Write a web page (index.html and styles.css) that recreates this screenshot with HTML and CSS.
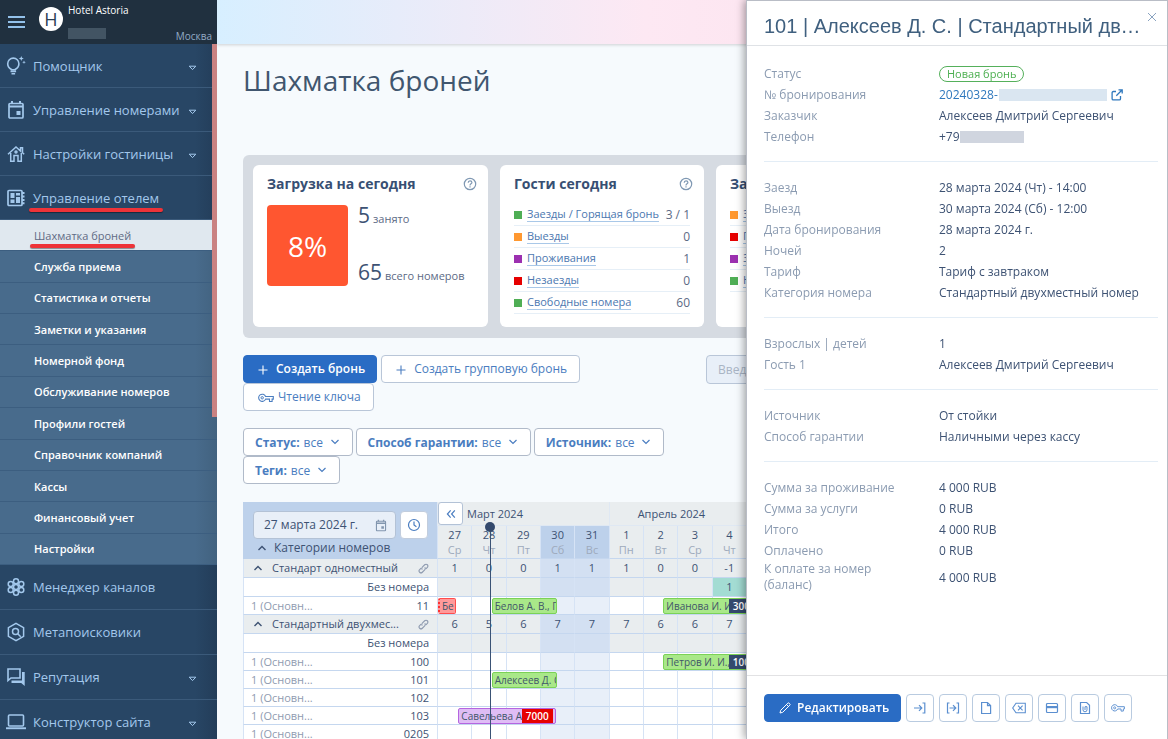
FILE: index.html
```html
<!DOCTYPE html>
<html lang="ru">
<head>
<meta charset="utf-8">
<title>Шахматка броней</title>
<link rel="stylesheet" href="styles.css">
</head>
<body>
<svg class="defs" aria-hidden="true">
  <symbol id="i-caret" viewBox="0 0 9 6"><path d="M1.2 1.2h6.6L4.5 4.6z" fill="none" stroke="currentColor"/></symbol>
  <symbol id="i-chevron" viewBox="0 0 10 6"><path d="M1.5 1L5 4.5 8.500 1" fill="none" stroke="currentColor" stroke-width="1.200"/></symbol>
  <symbol id="i-up" viewBox="0 0 10 6"><path d="M1.500 5L5 1.500 8.500 5" fill="none" stroke="currentColor" stroke-width="1.400"/></symbol>
  <symbol id="i-help" viewBox="0 0 14 14"><g fill="none" stroke="currentColor" stroke-width="1.200"><circle cx="7" cy="7" r="5.700"/><path d="M5.200 5.700c0-2.600 3.700-2.400 3.700-.2 0 1.300-1.900 1.400-1.900 2.900M7 9.300v1.200"/></g></symbol>
  <symbol id="i-plus" viewBox="0 0 10 10"><path d="M5 .5v9M.5 5h9" stroke="currentColor" stroke-width="1.100"/></symbol>
  <symbol id="i-key" viewBox="0 0 16 10"><path d="M7.600 3.500h7.700v2.600h-1.200v2.400h-2.600V6.100H7.600A3.600 3.600 0 1 1 7.600 3.500z" fill="none" stroke="currentColor" stroke-width="1.100"/><circle cx="4.200" cy="4.800" r="1.200" fill="none" stroke="currentColor"/></symbol>
  <symbol id="i-event" viewBox="0 0 18 20"><rect x="2" y="3.500" width="14" height="14.500" rx="1" fill="none" stroke="currentColor" stroke-width="1.700"/><path d="M2 5.500h14v2H2zM4 1h2v3H4zM12 1h2v3h-2zM9.500 11h4v4h-4z" fill="currentColor"/></symbol>
  <symbol id="i-link" viewBox="0 0 12 12"><g fill="none" stroke="currentColor" stroke-width="1.200"><path d="M4.700 7.300a2 2 0 0 1 0-2.800l2.600-2.600a2.050 2.050 0 0 1 2.900 2.900L8.600 6.400"/><path d="M7.300 4.700a2 2 0 0 1 0 2.800L4.700 10.100A2.050 2.050 0 0 1 1.800 7.200L3.400 5.600"/></g></symbol>
</svg>

<div class="app">
  <aside class="sidebar">
    <header class="brand">
      <button class="burger" aria-label="Меню"><span></span><span></span><span></span></button>
      <span class="brand-logo">H</span>
      <span class="brand-text">
        <span class="brand-name">Hotel Astoria</span>
        <span class="brand-mask"></span>
        <span class="brand-city">Москва</span>
      </span>
    </header>
    <nav class="nav">
      <a class="nav-item" href="#"><svg class="nav-icon" viewBox="0 0 20 20"><path d="M5.500 13.500C2.800 12 1.700 9.800 1.700 7.700a5.600 5.600 0 0 1 11.200 0c0 2.100-1.100 4.300-3.800 5.800v.4H5.500z" fill="none" stroke="currentColor" stroke-width="1.600"/><path d="M4.500 15.500h5.600M5.500 17.800h3.600" stroke="currentColor" stroke-width="1.500"/><path d="M15.300 0l.7 1.800 1.800.7-1.800.7-.7 1.800-.7-1.800-1.800-.7 1.800-.7zM18 4.500l.5 1.300 1.300.5-1.300.5-.5 1.300-.5-1.300-1.300-.5 1.300-.5z" fill="currentColor"/></svg><span>Помощник</span><svg class="nav-caret"><use href="#i-caret"/></svg></a>
      <a class="nav-item" href="#"><svg class="nav-icon"><use href="#i-event"/></svg><span>Управление номерами</span><svg class="nav-caret"><use href="#i-caret"/></svg></a>
      <a class="nav-item" href="#"><svg class="nav-icon" viewBox="0 0 20 20"><g fill="none" stroke="currentColor" stroke-width="1.500"><path d="M2 10.200L10 3l4.500 4V3.700h2v5l1.700 1.500"/><path d="M4.700 9v8.200H8v-5.700h4v5.700h3.300V9"/><circle cx="10" cy="8" r="1"/></g></svg><span>Настройки гостиницы</span><svg class="nav-caret"><use href="#i-caret"/></svg></a>
      <a class="nav-item" href="#"><svg class="nav-icon" viewBox="0 0 20 20"><rect x="2" y="2.500" width="14" height="15" rx="1" fill="none" stroke="currentColor" stroke-width="1.700"/><path d="M4.500 5h4v5h-4zM4.500 11.500h4V15h-4zM10 5h4v2.500h-4zM10 9h4v6h-4zM16 4h2.500v2H16zM16 7.500h2.500v2H16zM16 11h2.500v2H16zM16 14.300h2.500v2H16z" fill="currentColor"/></svg><span class="marked">Управление отелем</span></a>
      <div class="subnav">
        <a class="subnav-item subnav-item--active" href="#"><span class="marked">Шахматка броней</span></a>
        <a class="subnav-item" href="#">Служба приема</a>
        <a class="subnav-item" href="#">Статистика и отчеты</a>
        <a class="subnav-item" href="#">Заметки и указания</a>
        <a class="subnav-item" href="#">Номерной фонд</a>
        <a class="subnav-item" href="#">Обслуживание номеров</a>
        <a class="subnav-item" href="#">Профили гостей</a>
        <a class="subnav-item" href="#">Справочник компаний</a>
        <a class="subnav-item" href="#">Кассы</a>
        <a class="subnav-item" href="#">Финансовый учет</a>
        <a class="subnav-item" href="#">Настройки</a>
      </div>
      <div class="nav-lower">
        <a class="nav-item" href="#"><svg class="nav-icon" viewBox="0 0 20 20"><g fill="none" stroke="currentColor" stroke-width="1.500"><circle cx="10" cy="10" r="2.500"/><circle cx="10" cy="4.300" r="2.500"/><circle cx="10" cy="15.700" r="2.500"/><circle cx="4.700" cy="7" r="2.500"/><circle cx="15.300" cy="7" r="2.500"/><circle cx="4.700" cy="13" r="2.500"/><circle cx="15.300" cy="13" r="2.500"/></g></svg><span>Менеджер каналов</span></a>
        <a class="nav-item" href="#"><svg class="nav-icon" viewBox="0 0 20 20"><g fill="none" stroke="currentColor" stroke-width="1.500"><path d="M10 1.300l7.600 4.400v8.600L10 18.700l-7.600-4.400V5.700z"/><circle cx="9.500" cy="9.500" r="3"/><path d="M11.700 11.700l3 3"/></g></svg><span>Метапоисковики</span></a>
        <a class="nav-item" href="#"><svg class="nav-icon" viewBox="0 0 20 20"><path d="M2 2h12v9H5l-3 2.500z" fill="none" stroke="currentColor" stroke-width="1.600"/><path d="M16 5h2.700v14l-3.500-3H5.500v-2.500H16z" fill="currentColor"/></svg><span>Репутация</span><svg class="nav-caret"><use href="#i-caret"/></svg></a>
        <a class="nav-item" href="#"><svg class="nav-icon" viewBox="0 0 20 20"><rect x="2.500" y="3" width="15" height="11" rx="1" fill="none" stroke="currentColor" stroke-width="1.600"/><path d="M0 15.300h20v1.900H0z" fill="currentColor"/></svg><span>Конструктор сайта</span><svg class="nav-caret"><use href="#i-caret"/></svg></a>
      </div>
    </nav>
    <div class="sidebar-thumb"></div>
  </aside>

  <main class="main">
    <div class="topbar"></div>
    <div class="content">
      <h1 class="title">Шахматка броней</h1>

      <section class="stats">
        <article class="card card--load">
          <header class="card-head"><h2>Загрузка на сегодня</h2><svg class="help"><use href="#i-help"/></svg></header>
          <div class="load">
            <div class="load-tile">8%</div>
            <div class="load-figures">
              <p><span class="figure">5</span> занято</p>
              <p><span class="figure">65</span> всего номеров</p>
            </div>
          </div>
        </article>
        <article class="card card--guests">
          <header class="card-head"><h2>Гости сегодня</h2><svg class="help"><use href="#i-help"/></svg></header>
          <ul class="guests">
            <li><i class="dot dot--green"></i><a href="#">Заезды / Горящая бронь</a><span>3 / 1</span></li>
            <li><i class="dot dot--orange"></i><a href="#">Выезды</a><span>0</span></li>
            <li><i class="dot dot--purple"></i><a href="#">Проживания</a><span>1</span></li>
            <li><i class="dot dot--red"></i><a href="#">Незаезды</a><span>0</span></li>
            <li><i class="dot dot--green"></i><a href="#">Свободные номера</a><span>60</span></li>
          </ul>
        </article>
        <article class="card card--more">
          <header class="card-head"><h2>За</h2></header>
          <ul class="guests">
            <li><i class="dot dot--orange"></i><a href="#">З</a></li>
            <li><i class="dot dot--red"></i><a href="#">П</a></li>
            <li><i class="dot dot--purple"></i><a href="#">З</a></li>
            <li><i class="dot dot--green"></i><a href="#">Н</a></li>
          </ul>
        </article>
      </section>

      <div class="toolbar">
        <div class="wrap-row">
          <button class="btn btn--primary"><svg class="ic-plus"><use href="#i-plus"/></svg>Создать бронь</button>
          <button class="btn"><svg class="ic-plus"><use href="#i-plus"/></svg>Создать групповую бронь</button>
          <button class="btn btn--key"><svg class="ic-key"><use href="#i-key"/></svg>Чтение ключа</button>
        </div>
        <input class="search" type="text" placeholder="Введите" aria-label="Поиск">
      </div>

      <div class="toolbar toolbar--filters">
        <div class="wrap-row">
          <label class="filter"><b>Статус:</b><select><option>все</option></select><svg class="ic-chevron"><use href="#i-chevron"/></svg></label>
          <label class="filter"><b>Способ гарантии:</b><select><option>все</option></select><svg class="ic-chevron"><use href="#i-chevron"/></svg></label>
          <label class="filter"><b>Источник:</b><select><option>все</option></select><svg class="ic-chevron"><use href="#i-chevron"/></svg></label>
          <label class="filter"><b>Теги:</b><select><option>все</option></select><svg class="ic-chevron"><use href="#i-chevron"/></svg></label>
        </div>
      </div>

      <div class="calendar">
        <table class="grid">
          <thead>
            <tr class="months">
              <th class="corner" rowspan="2">
                <div class="corner-tools">
                  <span class="date-box"><input type="text" value="27 марта 2024 г." aria-label="Дата"><svg class="ic-date"><use href="#i-event"/></svg></span>
                  <button class="clock" aria-label="Сегодня"><svg viewBox="0 0 14 14"><circle cx="7" cy="7" r="5.500" fill="none" stroke="currentColor" stroke-width="1.200"/><path d="M7 3.500V7l2.400 1.800" fill="none" stroke="currentColor" stroke-width="1.200"/></svg></button>
                </div>
                <div class="corner-toggle"><svg class="ic-up"><use href="#i-up"/></svg>Категории номеров</div>
              </th>
              <th colspan="5"><div class="month-head"><button class="back" aria-label="Назад"><svg viewBox="0 0 10 10"><path d="M4.700 2L2 5l2.700 3M8.200 2L5.500 5l2.700 3" fill="none" stroke="currentColor"/></svg></button>Март 2024</div></th>
              <th class="april" colspan="16">Апрель 2024</th>
            </tr>
            <tr class="days"></tr>
          </thead>
          <tbody></tbody>
        </table>
        <div class="now"></div>
      </div>
    </div>
  </main>

  <aside class="panel">
    <header class="panel-head">
      <h2>101 | Алексеев Д. С. | Стандартный двухместный номер</h2>
      <button class="close" aria-label="Закрыть"><svg viewBox="0 0 10 10"><path d="M1 1l8 8M9 1L1 9" stroke="currentColor"/></svg></button>
    </header>
    <div class="panel-body">
      <dl class="facts">
        <dt>Статус</dt><dd><span class="badge">Новая бронь</span></dd>
        <dt>№ бронирования</dt><dd><a class="ref" href="#">20240328-<span class="mask mask--ref"></span><svg class="ic-open" viewBox="0 0 12 12"><path d="M5 2.500H2.300a1.200 1.200 0 0 0-1.200 1.200v6a1.200 1.200 0 0 0 1.200 1.200h6a1.200 1.200 0 0 0 1.200-1.200V7M7.500.8h3.700v3.700M11 1L5.300 6.700" fill="none" stroke="currentColor" stroke-width="1.300"/></svg></a></dd>
        <dt>Заказчик</dt><dd>Алексеев Дмитрий Сергеевич</dd>
        <dt>Телефон</dt><dd class="phone">+79<span class="mask mask--phone"></span></dd>
      </dl>
      <dl class="facts">
        <dt>Заезд</dt><dd>28 марта 2024 (Чт) - 14:00</dd>
        <dt>Выезд</dt><dd>30 марта 2024 (Сб) - 12:00</dd>
        <dt>Дата бронирования</dt><dd>28 марта 2024 г.</dd>
        <dt>Ночей</dt><dd>2</dd>
        <dt>Тариф</dt><dd>Тариф с завтраком</dd>
        <dt>Категория номера</dt><dd>Стандартный двухместный номер</dd>
      </dl>
      <dl class="facts">
        <dt>Взрослых | детей</dt><dd>1</dd>
        <dt>Гость 1</dt><dd>Алексеев Дмитрий Сергеевич</dd>
      </dl>
      <dl class="facts">
        <dt>Источник</dt><dd>От стойки</dd>
        <dt>Способ гарантии</dt><dd>Наличными через кассу</dd>
      </dl>
      <dl class="facts">
        <dt>Сумма за проживание</dt><dd>4 000 RUB</dd>
        <dt>Сумма за услуги</dt><dd>0 RUB</dd>
        <dt>Итого</dt><dd>4 000 RUB</dd>
        <dt>Оплачено</dt><dd>0 RUB</dd>
        <dt class="two-line">К оплате за номер (баланс)</dt><dd>4 000 RUB</dd>
      </dl>
    </div>
    <footer class="panel-foot">
      <button class="btn btn--primary btn--edit"><svg class="ic-pen" viewBox="0 0 12 12"><path d="M1 11l.7-2.700L8.900 1.100a.8.8 0 0 1 1.100 0l.9.9a.8.8 0 0 1 0 1.100L3.700 10.300zM7.500 2.500l2 2" fill="none" stroke="currentColor"/></svg>Редактировать</button>
      <button class="tool" aria-label="Заселить"><svg viewBox="0 0 14 14"><path d="M1 7h8M6 4.200L8.800 7 6 9.800M9.500 2h2.300v10H9.500" fill="none" stroke="currentColor" stroke-width="1.200"/></svg></button>
      <button class="tool" aria-label="Выселить"><svg viewBox="0 0 14 14"><path d="M3.500 7h6M7 4.200L9.800 7 7 9.800M10.500 2h2v10h-2M3.500 2h-2v10h2" fill="none" stroke="currentColor" stroke-width="1.200"/></svg></button>
      <button class="tool" aria-label="Документ"><svg viewBox="0 0 14 14"><path d="M8.500 1.500H2.600v11h9V4.600zM8.500 1.500v3.200h3.100" fill="none" stroke="currentColor" stroke-width="1.200"/></svg></button>
      <button class="tool" aria-label="Отменить"><svg viewBox="0 0 14 14"><path d="M4 2.300h9.300v9.400H4L.7 7zM6 4.700l4.600 4.600M10.600 4.700L6 9.300" fill="none" stroke="currentColor" stroke-width="1.100"/></svg></button>
      <button class="tool" aria-label="Оплата"><svg viewBox="0 0 14 14"><rect x="1.500" y="2.500" width="11" height="9" rx="1" fill="none" stroke="currentColor" stroke-width="1.200"/><path d="M1.500 5h11v2.200h-11z" fill="currentColor"/></svg></button>
      <button class="tool" aria-label="Вложение"><svg viewBox="0 0 14 14"><path d="M8.700 1.500H2.500v11h9V4.300z" fill="none" stroke="currentColor" stroke-width="1.200"/><path d="M5 5.500v3.300a2 2 0 0 0 4 0V5.700H7v3.300" fill="none" stroke="currentColor"/></svg></button>
      <button class="tool" aria-label="Ключ"><svg viewBox="0 0 16 12"><use href="#i-key"/></svg></button>
    </footer>
  </aside>
</div>
<script src="calendar.js"></script>
</body>
</html>
```
FILE: styles.css
```css
* { box-sizing: border-box; }
body {
  margin: 0;
  font-family: "Open Sans", "Noto Sans", sans-serif;
  font-size: 12px;
  color: #3d5273;
  background: #f6fafd;
}
h1, h2, p, ul, dl, dd { margin: 0; padding: 0; }
ul { list-style: none; }
a { color: inherit; text-decoration: none; }
button, input, select { font: inherit; color: inherit; }
button { cursor: pointer; padding: 0; }
svg { flex: none; }
.defs { display: none; }

.app { display: flex; height: 100vh; overflow: hidden; }

/* Sidebar */
.sidebar {
  position: relative;
  flex: none;
  width: 217px;
  overflow: hidden;
  background: linear-gradient(90deg, #284665 90%, #233d59);
  color: #a3c8ec;
}
.brand {
  display: flex;
  height: 44px;
  padding-left: 8px;
  background: #20303f;
}
.burger {
  display: flex;
  flex-direction: column;
  gap: 3px;
  align-self: center;
  width: 17px;
  border: 0;
  background: none;
}
.burger span { height: 2px; background: #93c1ea; }
.brand-logo {
  display: grid;
  place-items: center;
  width: 24px;
  height: 24px;
  margin: 7px 5px 0 14px;
  border-radius: 50%;
  background: #fff;
  color: #2b3f55;
  font-size: 18px;
}
.brand-text {
  display: flex;
  flex: 1;
  flex-direction: column;
  padding: 3px 5px 0 0;
  font-size: 10px;
  line-height: 14px;
}
.brand-name { color: #fff; }
.brand-mask { width: 38px; height: 11px; margin-top: 11px; background: #425463; }
.brand-city { margin-top: -10px; align-self: flex-end; color: #93abc6; }
.nav-item {
  display: flex;
  align-items: center;
  height: 44px;
  padding: 0 20px 0 6px;
  border-bottom: 1px solid #3b5a7a;
  font-size: 13px;
}
.nav-lower .nav-item { height: 45px; }
.nav-icon { width: 20px; height: 20px; margin-right: 7px; }
.nav-caret { width: 9px; height: 6px; margin: 4px 0 0 auto; }
.marked { position: relative; }
.marked::after {
  content: "";
  position: absolute;
  left: -4px;
  right: -4px;
  bottom: -5px;
  height: 4px;
  border-radius: 2px;
  background: #ee3338;
  box-shadow: 0 1px 1px #00000066;
}
.subnav {
  display: flex;
  flex-direction: column;
  min-height: 345px;
  background: linear-gradient(90deg, #486b8c 90%, #42627f);
  color: #fff;
  font-size: 11px;
  font-weight: 600;
}
.subnav-item {
  display: flex;
  flex: 1;
  align-items: center;
  padding-left: 34px;
  border-bottom: 1px solid #3c5e80;
}
.subnav-item--active { background: #e0e8ef; color: #5f6b85; font-weight: 400; }
.sidebar-thumb {
  position: absolute;
  top: 44px;
  right: 0;
  width: 5px;
  height: 373px;
  background: #ca8282;
}

/* Main area */
.main { flex: 1; min-width: 0; overflow: hidden; }
.topbar {
  height: 44px;
  background: linear-gradient(90deg, #d7efff, #fde8f3 45%, #fcdde8);
  box-shadow: 0 1px 3px #0000002b;
}
.content { padding: 16px 10px 0 26px; }
.title { padding-bottom: 55px; line-height: 40px; font-size: 28px; font-weight: 400; color: #40566f; }

.stats {
  display: flex;
  gap: 12px;
  padding: 10px 10px 11px;
  border-radius: 6px;
  background: #d6dbe2;
}
.card { min-height: 162px; padding: 9px 14px 0; border-radius: 6px; background: #fff; }
.card--load { flex: none; width: 235px; }
.card--guests { flex: none; width: 204px; }
.card--more { flex: 1; }
.card-head { display: flex; justify-content: space-between; align-items: center; line-height: 20px; }
.card-head h2 { font-size: 14px; font-weight: 700; color: #374f73; }
.help { width: 14px; height: 14px; margin-right: -3px; color: #7f98b3; }
.load { display: flex; gap: 10px; margin-top: 11px; }
.load-tile {
  display: grid;
  place-items: center;
  width: 81px;
  height: 81px;
  border-radius: 4px;
  background: #ff5630;
  color: #fff;
  font-size: 28px;
}
.load-figures { display: flex; flex-direction: column; justify-content: space-between; font-size: 11px; line-height: 20px; color: #5c6a85; }
.load-figures p { display: flex; align-items: baseline; gap: 3px; }
.figure { font-size: 21px; color: #3d5273; }
.guests { margin-top: 10px; }
.guests li { display: flex; align-items: center; height: 22px; border-bottom: 1px solid #e6eff7; line-height: 14px; font-size: 11px; white-space: nowrap; }
.guests li span { margin-left: auto; color: #5c6a85; font-size: 12px; }
.guests a { border-bottom: 1px solid #a9c8e8; color: #4c78b0; }
.dot { width: 8px; height: 8px; margin-right: 5px; }
.dot--green { background: #4fae55; }
.dot--orange { background: #ff9830; }
.dot--purple { background: #9c30b0; }
.dot--red { background: #e60000; }

.toolbar { display: grid; grid-template-columns: 463px 1fr; align-items: start; margin-top: 17px; }
.wrap-row { display: flex; flex-wrap: wrap; column-gap: 4px; }
.btn {
  display: flex;
  align-items: center;
  height: 28px;
  padding: 0 12px 2px 14px;
  border: 1px solid #b9c6d8;
  border-radius: 4px;
  background: #fff;
  color: #4a7dc0;
}
.btn--primary { padding-right: 11px; border-color: #2a6cc4; background: #2a6cc4; color: #fff; font-weight: 600; }
.ic-plus { width: 10px; height: 10px; margin: 4px 8px 0 0; }
.ic-key { width: 16px; height: 10px; margin: 4px 4px 0 0; }
.search { height: 29px; padding: 0 11px; border: 1px solid #b9c6d8; border-radius: 4px; background: #e8eff8; }
.search::placeholder { color: #a9b4c4; opacity: 1; }
.toolbar--filters .wrap-row { column-gap: 3px; }
.filter {
  display: flex;
  align-items: center;
  height: 28px;
  padding: 0 12px 0 11px;
  border: 1px solid #b0bac9;
  border-radius: 4px;
  background: #fff;
  color: #4a7dc0;
}
.filter b { margin-right: 4px; }
.filter select { appearance: none; width: 26px; padding: 0; border: 0; background: none; }
.ic-chevron { width: 10px; height: 6px; }

/* Booking calendar */
.calendar { position: relative; margin-top: 18px; }
.grid { width: 100%; table-layout: fixed; border-spacing: 0; }
.grid th, .grid td {
  padding: 0;
  border-bottom: 1px solid #c5d7ef;
  border-left: 1px solid #d6e3f5;
  font-weight: 400;
  line-height: 16px;
  text-align: center;
  white-space: nowrap;
}
.grid .corner { width: 194px; padding: 9px 9px 0; border-color: #bdd1eb; background: #bdd1eb; vertical-align: top; }
.corner-tools { display: flex; gap: 4px; }
.date-box { display: flex; flex: 1; align-items: center; min-width: 0; height: 28px; padding: 0 8px 0 10px; border: 1px solid #b3c2d6; border-radius: 4px; background: #e8eff8; }
.date-box input { flex: 1; min-width: 0; padding: 0; border: 0; background: none; }
.ic-date { width: 12px; height: 13px; color: #8296ae; }
.clock { display: grid; place-items: center; width: 28px; height: 28px; border: 1px solid #c2cddd; border-radius: 4px; background: #fff; color: #4a7dc0; }
.clock svg { width: 14px; height: 14px; }
.corner-toggle { display: flex; align-items: center; gap: 7px; padding-left: 4px; line-height: 18px; }
.ic-up { width: 10px; height: 6px; }
.months { height: 24px; background: #e9edef; }
.months th:not(.corner) { border-color: #dfe8f3; font-size: 11px; }
.month-head { display: flex; align-items: center; gap: 4px; }
.back { display: grid; place-items: center; width: 25px; height: 23px; border: 1px solid #b3c2d6; border-radius: 3px; background: #fff; color: #4a7dc0; }
.back svg { width: 12px; height: 12px; }
.grid .april { padding-left: 28px; text-align: left; }
.days { height: 33px; background: #e9edef; }
.days span { display: block; color: #9eaabc; }
.grid .days th { font-size: 11px; line-height: 15px; }
.days .weekend { background: #bdd1eb; }
.category, .unassigned { height: 19px; background: #e9edef; }
.room { height: 18px; background: #fff; }
.grid tbody td, .grid tbody th { font-size: 11px; }
.category .weekend, .unassigned .weekend { background: #d3e0f2; }
.room .weekend { background: #e8eff9; }
.unassigned th { background: #fff; }
.unassigned .overbooked { background: #a3dcd3; }
.row-head { display: flex; align-items: center; justify-content: space-between; padding: 0 8px 0 7px; }
.row-head .ic-up { margin: 0 9px 0 2px; }
.row-head .ic-link { width: 11px; height: 11px; color: #8f9bb0; }
.row-head .name { margin-right: auto; }
.room .group { color: #8f9bb0; }
.grid td { position: relative; }
.booking {
  position: absolute;
  z-index: 1;
  top: 1px;
  display: flex;
  height: 16px;
  overflow: hidden;
  border: 1px solid #7bd257;
  border-radius: 2px;
  background: #a9e889;
  color: #41566a;
  font-size: 10px;
  line-height: 14px;
  text-align: left;
}
.booking span { flex: 1; min-width: 0; overflow: hidden; padding-left: 2px; }
.booking b { padding: 0 4px; background: #34496d; color: #fff; font-weight: 600; }
.booking--purple { padding-right: 2px; border-color: #b565e0; background: #dfbdf5; }
.booking--purple b { background: #e60000; }
.booking--red { border-color: #ff4d4d; border-left: 2px dotted #f33; background: #ff9a9a; }
.now { position: absolute; z-index: 2; top: 24px; bottom: 0; left: 247px; width: 1px; background: #3a5275; }
.now::before { content: ""; position: absolute; top: -4px; left: -5px; width: 10px; height: 10px; border-radius: 50%; background: #34496d; }

/* Reservation drawer */
.panel {
  position: fixed;
  z-index: 5;
  inset: 0 0 0 auto;
  display: flex;
  flex-direction: column;
  width: 422px;
  border: 1px solid #b9bdc6;
  border-bottom: 0;
  background: #fff;
  box-shadow: -2px 0 8px #00000059;
}
.panel-head { display: flex; height: 45px; padding-left: 17px; border-bottom: 1px solid #dfe2e6; }
.panel-head h2 {
  flex: 1;
  overflow: hidden;
  font-family: "Liberation Sans", "Open Sans", sans-serif;
  font-size: 20px;
  font-weight: 400;
  line-height: 50px;
  color: #40607f;
  white-space: nowrap;
  text-overflow: ellipsis;
}
.close { width: 10px; height: 10px; margin: 11px 10px 0 4px; border: 0; background: none; color: #8aa3c0; }
.close svg { display: block; width: 10px; height: 10px; }
.panel-body { flex: 1; padding: 2px 9px 0 17px; }
.facts {
  display: grid;
  grid-template-columns: 175px 1fr;
  grid-auto-rows: minmax(21px, auto);
  align-items: center;
  padding: 15px 0 14px;
  border-top: 1px solid #e3edf6;
}
.facts:first-child { border-top: 0; }
.facts dt { color: #8b9bb1; }
.facts .two-line { padding-right: 50px; line-height: 16px; }
.badge { display: inline-block; height: 16px; padding: 0 7px; border: 1px solid #55b05b; border-radius: 8px; color: #4caf50; font-size: 11px; line-height: 14px; }
.ref, .phone { display: flex; align-items: center; }
.ref { color: #2f78bd; }
.mask { height: 12px; }
.mask--ref { width: 108px; margin: 0 4px 0 1px; background: #dae6f1; }
.mask--phone { width: 64px; background: #d0d5df; }
.ic-open { width: 12px; height: 12px; }
.panel-foot { display: flex; gap: 5px; padding: 18px 9px 17px 17px; border-top: 1px solid #e2e2e4; }
.ic-pen { width: 12px; height: 12px; margin: 2px 6px 0 0; }
.tool { display: grid; place-items: center; width: 28px; height: 28px; border: 1px solid #b9cbe0; border-radius: 4px; background: #fff; color: #5b8fd0; }
.tool svg { width: 14px; height: 14px; }
```
FILE: calendar.js
```js
const WEEKDAYS = ['Вс', 'Пн', 'Вт', 'Ср', 'Чт', 'Пт', 'Сб'];
const FIRST_DAY = Date.UTC(2024, 2, 27);
const COLUMNS = 21;

const ROWS = [
  { type: 'category', name: 'Стандарт одноместный', counts: [1, 0, 0, 1, 1, 1, 0, 0, -1] },
  { type: 'unassigned', overbooked: { col: 8, value: 1 } },
  { type: 'room', number: '11', bookings: [
    { col: 0, left: 0, width: 54, text: 'Бе', kind: 'red' },
    { col: 1, left: 58, width: 196, text: 'Белов А. В., Г' },
    { col: 6, left: 58, width: 292, text: 'Иванова И. И', debt: '3000' }
  ] },
  { type: 'category', name: 'Стандартный двухмес...', counts: [6, 5, 6, 7, 7, 7, 6, 6, 7] },
  { type: 'unassigned' },
  { type: 'room', number: '100', bookings: [{ col: 6, left: 58, width: 292, text: 'Петров И. И.,', debt: '1000' }] },
  { type: 'room', number: '101', bookings: [{ col: 1, left: 58, width: 196, text: 'Алексеев Д. С.' }] },
  { type: 'room', number: '102' },
  { type: 'room', number: '103', bookings: [{ col: 0, left: 61, width: 292, text: 'Савельева А.', debt: '7000', kind: 'purple' }] },
  { type: 'room', number: '0205' },
  { type: 'room', number: '' }
];

const days = Array.from({ length: COLUMNS }, (_, i) => {
  const date = new Date(FIRST_DAY + i * 86400000);
  return { number: date.getUTCDate(), weekday: date.getUTCDay() };
});
const dayClass = day => (day.weekday % 6 === 0 ? 'weekend' : '');

document.querySelector('.days').innerHTML = days
  .map(day => `<th class="${dayClass(day)}">${day.number}<span>${WEEKDAYS[day.weekday]}</span></th>`)
  .join('');

function rowHead(row) {
  if (row.type === 'category') {
    return `<div class="row-head"><svg class="ic-up"><use href="#i-up"/></svg><span class="name">${row.name}</span><svg class="ic-link"><use href="#i-link"/></svg></div>`;
  }
  if (row.type === 'unassigned') {
    return '<div class="row-head"><span></span><span>Без номера</span></div>';
  }
  return `<div class="row-head"><span class="group">1 (Основн...</span><span>${row.number}</span></div>`;
}

function booking(item) {
  const debt = item.debt ? `<b>${item.debt}</b>` : '';
  return `<div class="booking booking--${item.kind || 'green'}" style="left:${item.left}%;width:${item.width}%"><span>${item.text}</span>${debt}</div>`;
}

function cell(row, day, col) {
  if (row.overbooked && row.overbooked.col === col) {
    return `<td class="overbooked">${row.overbooked.value}</td>`;
  }
  const count = row.counts && row.counts[col] !== undefined ? row.counts[col] : '';
  const bars = (row.bookings || []).filter(item => item.col === col).map(booking).join('');
  return `<td class="${dayClass(day)}">${count}${bars}</td>`;
}

document.querySelector('.grid tbody').innerHTML = ROWS
  .map(row => `<tr class="${row.type}"><th>${rowHead(row)}</th>${days.map((day, col) => cell(row, day, col)).join('')}</tr>`)
  .join('');
```
